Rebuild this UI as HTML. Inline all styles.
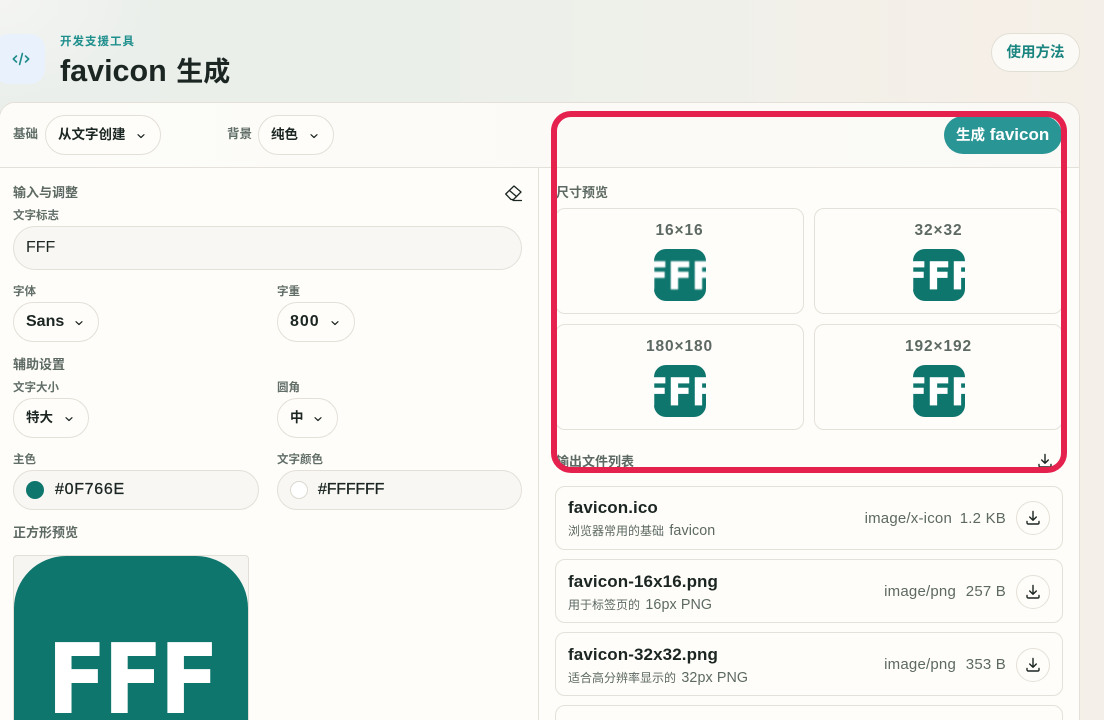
<!DOCTYPE html>
<html lang="zh-CN"><head><meta charset="utf-8"><title>favicon 生成</title>
<style>
*{box-sizing:border-box}
html,body{margin:0;padding:0;width:1104px;height:720px;overflow:hidden}
body{position:relative;font-family:"Liberation Sans","Noto Sans CJK SC",sans-serif;color:#1b2522;background:linear-gradient(90deg,#ebefeb 0%,#eaefea 35%,#f0f0ea 65%,#f5efe7 90%,#f4f0e9 100%)}
.a{position:absolute;white-space:nowrap}
.glow{position:absolute;left:0;top:0;width:150px;height:100px;background:radial-gradient(150px 100px at 0 0,#f4f5f3 0%,rgba(240,243,240,0) 100%)}
.panel{position:absolute;left:-1px;top:102px;width:1081px;height:640px;background:#fffdf9;border:1px solid #e4e0d7;border-radius:16px;overflow:hidden}
.bar{position:absolute;left:0;top:0;right:0;height:65px;border-bottom:1px solid #e4e1d9;background:linear-gradient(90deg,#fdfcf8,#faf9f5)}
.vl{position:absolute;left:538px;top:168px;width:1px;height:552px;background:#e4e1d9}
.h{font-size:13px;line-height:16px;font-weight:700;color:#5d6963;margin-top:1px}
.l{font-size:11.5px;line-height:14px;font-weight:700;color:#626e68;margin-top:1px}
.sel{position:absolute;height:40px;border:1px solid #e3e0d8;border-radius:20px;background:#fffdf9;font-weight:700;font-size:16px;line-height:38px;padding-left:12px;white-space:nowrap}
.sel svg{position:absolute;top:14px;width:12px;height:12px}
.inp{position:absolute;border:1px solid #e3e0d8;background:#f8f7f3}
.col{position:absolute;height:40px;top:470px;border:1px solid #e3e0d8;border-radius:20px;background:#f8f7f3}
.col i{position:absolute;left:12px;top:10px;width:18px;height:18px;border-radius:50%}
.col b{position:absolute;left:41px;top:0;line-height:38px;font-size:16px;font-weight:400;-webkit-text-stroke:.3px #1b2522}
.card{position:absolute;width:249px;height:106px;border:1px solid #e4e1d8;border-radius:10px;background:#fffdf9;overflow:hidden}
.card span{position:absolute;left:0;right:0;top:14px;text-align:center;font-size:15.5px;line-height:16px;font-weight:700;color:#5d6963;letter-spacing:.9px}
.ic{position:absolute;left:98px;top:40px;width:52px;height:52px;background:#0f766e;border-radius:12px;overflow:hidden;text-align:center}
.ic b{position:absolute;left:-34px;right:-34px;top:2px;line-height:52px;font-family:"DejaVu Sans",sans-serif;font-size:37px;font-weight:700;color:#fff;letter-spacing:.2px;-webkit-text-stroke:.8px #fff;text-align:center;transform:scaleX(.94)}
.row{position:absolute;left:555px;width:508px;height:64px;border:1px solid #e4e1d8;border-radius:10px;background:#fffdf9}
.row .n{position:absolute;left:12px;top:11px;font-size:17px;line-height:20px;font-weight:700;letter-spacing:.1px;white-space:nowrap}
.row .s{position:absolute;left:12px;top:36px;font-size:12px;line-height:16px;color:#5d6963;white-space:nowrap}
.row .s em{font-style:normal;font-size:14.3px;margin-left:2px;letter-spacing:.1px}
.row .m{position:absolute;top:23px;font-size:15px;line-height:18px;color:#5d6963;white-space:nowrap;letter-spacing:.2px}
.row .d{position:absolute;left:460px;top:14px;width:34px;height:34px;border:1px solid #e4e1d8;border-radius:50%;background:#fffdf9}
.row .d svg{position:absolute;left:8px;top:8px}
.red{position:absolute;left:551px;top:111px;width:516px;height:362px;border:6px solid #e5214e;border-radius:20px}
</style></head><body>
<div class="glow"></div>
<div class="a" style="left:-6px;top:34px;width:51px;height:50px;border-radius:15px;background:#e9f1fc"></div>
<svg class="a" style="left:12px;top:50px" width="18" height="18" viewBox="0 0 18 18" fill="none" stroke="#1f8c8a" stroke-width="1.6" stroke-linecap="round" stroke-linejoin="round"><path d="M4.5 6 1.3 9l3.2 3M13.5 6l3.2 3-3.2 3M10.4 3.5 7.6 14.5"/></svg>
<div class="a" style="left:60px;top:34px;font-size:11.5px;line-height:16px;font-weight:700;color:#1f8f8d;letter-spacing:1px">开发支援工具</div>
<div class="a" style="left:60px;top:53px;font-size:30.5px;line-height:36px;font-weight:700;color:#1b2522">favicon <span style="font-size:27px;margin-left:1px">生成</span></div>
<div class="a" style="left:991px;top:33px;width:89px;height:39px;border:1px solid #e2dfd5;border-radius:20px;background:#fbfaf6;text-align:center;font-size:14.5px;line-height:38px;font-weight:700;color:#1a8580">使用方法</div>

<div class="panel"><div class="bar"></div></div>
<div class="vl"></div>

<div class="a l" style="left:13px;top:126px;font-size:12.5px">基础</div>
<div class="sel" style="left:45px;top:115px;width:116px;font-size:13.5px">从文字创建<svg style="left:89px" viewBox="0 0 12 12" fill="none" stroke="#1b2522" stroke-width="1.2" stroke-linecap="round" stroke-linejoin="round"><path d="M3 4.7 6 7.5 9 4.7"/></svg></div>
<div class="a l" style="left:227px;top:126px;font-size:12.5px">背景</div>
<div class="sel" style="left:258px;top:115px;width:76px;font-size:13.5px">纯色<svg style="left:49px" viewBox="0 0 12 12" fill="none" stroke="#1b2522" stroke-width="1.2" stroke-linecap="round" stroke-linejoin="round"><path d="M3 4.7 6 7.5 9 4.7"/></svg></div>
<div class="a" style="left:944px;top:116px;width:118px;height:38px;border-radius:19px;background:#2a9595;color:#fff;font-size:17px;line-height:38px;font-weight:700;padding-left:12px"><span style="font-size:14.5px">生成</span> favicon</div>

<div class="a h" style="left:13px;top:184px">输入与调整</div>
<svg class="a" style="left:504px;top:184px" width="18" height="18" viewBox="0 0 18 18" fill="none" stroke="#1b2522" stroke-width="1.3" stroke-linejoin="round" stroke-linecap="round"><path d="M1.7 10 10 2l7 6-7.5 7.5H7z"/><path d="M5.6 6.6 12.5 12.5M9 16.5h8.5"/></svg>
<div class="a l" style="left:13px;top:208px">文字标志</div>
<div class="inp" style="left:13px;top:226px;width:509px;height:44px;border-radius:22px"></div>
<div class="a" style="left:26px;top:238px;font-size:16px;line-height:20px">FFF</div>

<div class="a l" style="left:13px;top:284px">字体</div>
<div class="a l" style="left:277px;top:284px">字重</div>
<div class="sel" style="left:13px;top:302px;width:86px">Sans<svg style="left:59px" viewBox="0 0 12 12" fill="none" stroke="#1b2522" stroke-width="1.2" stroke-linecap="round" stroke-linejoin="round"><path d="M3 4.7 6 7.5 9 4.7"/></svg></div>
<div class="sel" style="left:277px;top:302px;width:78px;letter-spacing:1px">800<svg style="left:51px" viewBox="0 0 12 12" fill="none" stroke="#1b2522" stroke-width="1.2" stroke-linecap="round" stroke-linejoin="round"><path d="M3 4.7 6 7.5 9 4.7"/></svg></div>

<div class="a h" style="left:13px;top:356px">辅助设置</div>
<div class="a l" style="left:13px;top:380px">文字大小</div>
<div class="a l" style="left:277px;top:380px">圆角</div>
<div class="sel" style="left:13px;top:398px;width:76px;font-size:13.5px">特大<svg style="left:49px" viewBox="0 0 12 12" fill="none" stroke="#1b2522" stroke-width="1.2" stroke-linecap="round" stroke-linejoin="round"><path d="M3 4.7 6 7.5 9 4.7"/></svg></div>
<div class="sel" style="left:277px;top:398px;width:61px;font-size:13.5px">中<svg style="left:34px" viewBox="0 0 12 12" fill="none" stroke="#1b2522" stroke-width="1.2" stroke-linecap="round" stroke-linejoin="round"><path d="M3 4.7 6 7.5 9 4.7"/></svg></div>

<div class="a l" style="left:13px;top:452px">主色</div>
<div class="a l" style="left:277px;top:452px">文字颜色</div>
<div class="col" style="left:13px;width:246px"><i style="background:#0f766e"></i><b style="letter-spacing:.7px">#0F766E</b></div>
<div class="col" style="left:277px;width:245px"><i style="background:#fff;border:1px solid #dcd9d0"></i><b style="left:40px;letter-spacing:-.2px">#FFFFFF</b></div>

<div class="a h" style="left:13px;top:524px">正方形预览</div>
<div class="a" style="left:13px;top:555px;width:236px;height:200px;border:1px solid #e2dfd6;border-radius:4px;background:#f6f5f1"></div>
<div class="a" style="left:14px;top:556px;width:234px;height:234px;background:#0f766e;border-radius:52px;overflow:hidden"></div>
<div class="a" style="left:46.5px;top:624px;font-family:'DejaVu Sans',sans-serif;font-size:97.4px;line-height:112px;font-weight:700;color:#fff;letter-spacing:-4.1px;transform:scaleX(.9);transform-origin:0 0">FFF</div>

<div class="a h" style="left:556px;top:184px">尺寸预览</div>
<div class="card" style="left:555px;top:208px"><span>16×16</span><div class="ic"><b style="filter:blur(.7px)">FFF</b></div></div>
<div class="card" style="left:814px;top:208px"><span>32×32</span><div class="ic"><b style="filter:blur(.25px)">FFF</b></div></div>
<div class="card" style="left:555px;top:324px"><span>180×180</span><div class="ic"><b>FFF</b></div></div>
<div class="card" style="left:814px;top:324px"><span>192×192</span><div class="ic"><b>FFF</b></div></div>

<div class="a h" style="left:556px;top:453px">输出文件列表</div>
<svg class="a" style="left:1037px;top:453px" width="16" height="16" viewBox="0 0 16 16" fill="none" stroke="#1b2522" stroke-width="1.4" stroke-linecap="round" stroke-linejoin="round"><path d="M8 1.5V10M4.7 7 8 10.3 11.3 7M2 11.5v1.2A1.3 1.3 0 0 0 3.3 14h9.4a1.3 1.3 0 0 0 1.3-1.3v-1.2"/></svg>

<div class="row" style="top:486px"><div class="n">favicon.ico</div><div class="s">浏览器常用的基础 <em>favicon</em></div><div class="m" style="right:110px">image/x-icon</div><div class="m" style="right:56px">1.2 KB</div><div class="d"><svg width="16" height="16" viewBox="0 0 16 16" fill="none" stroke="#1b2522" stroke-width="1.4" stroke-linecap="round" stroke-linejoin="round"><path d="M8 1.5V10M4.7 7 8 10.3 11.3 7M2 11.5v1.2A1.3 1.3 0 0 0 3.3 14h9.4a1.3 1.3 0 0 0 1.3-1.3v-1.2"/></svg></div></div>
<div class="row" style="top:559px"><div class="n" style="top:12px">favicon-16x16.png</div><div class="s" style="top:37px">用于标签页的 <em>16px PNG</em></div><div class="m" style="right:106px">image/png</div><div class="m" style="right:56px">257 B</div><div class="d" style="top:15px"><svg width="16" height="16" viewBox="0 0 16 16" fill="none" stroke="#1b2522" stroke-width="1.4" stroke-linecap="round" stroke-linejoin="round"><path d="M8 1.5V10M4.7 7 8 10.3 11.3 7M2 11.5v1.2A1.3 1.3 0 0 0 3.3 14h9.4a1.3 1.3 0 0 0 1.3-1.3v-1.2"/></svg></div></div>
<div class="row" style="top:632px"><div class="n" style="top:12px">favicon-32x32.png</div><div class="s" style="top:37px">适合高分辨率显示的 <em>32px PNG</em></div><div class="m" style="right:106px">image/png</div><div class="m" style="right:56px">353 B</div><div class="d" style="top:15px"><svg width="16" height="16" viewBox="0 0 16 16" fill="none" stroke="#1b2522" stroke-width="1.4" stroke-linecap="round" stroke-linejoin="round"><path d="M8 1.5V10M4.7 7 8 10.3 11.3 7M2 11.5v1.2A1.3 1.3 0 0 0 3.3 14h9.4a1.3 1.3 0 0 0 1.3-1.3v-1.2"/></svg></div></div>
<div class="row" style="top:705px"></div>

<div class="red"></div>
</body></html>
